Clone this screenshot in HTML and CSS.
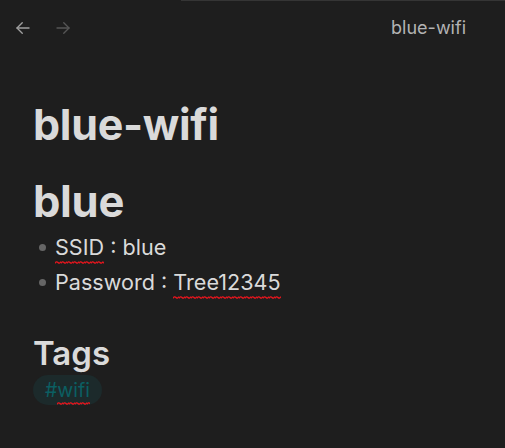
FILE: index.html
```html
<!DOCTYPE html>
<html>
<head>
<meta charset="utf-8">
<link rel="stylesheet" href="styles.css">
</head>
<body>
<div class="app">
  <div class="topline"></div>
  <header class="header">
    <div class="nav">
      <svg class="nav-btn" width="18" height="18" viewBox="0 0 24 24" fill="none" stroke="#a0a0a0" stroke-width="1.8" stroke-linecap="round" stroke-linejoin="round"><path d="M20 12H4"/><path d="M11 19l-7-7 7-7"/></svg>
      <svg class="nav-btn dim" width="18" height="18" viewBox="0 0 24 24" fill="none" stroke="#555" stroke-width="1.8" stroke-linecap="round" stroke-linejoin="round"><path d="M4 12h16"/><path d="M13 5l7 7-7 7"/></svg>
    </div>
    <div class="title">blue-wifi</div>
  </header>
  <main class="note">
    <h1 class="inline-title">blue-wifi</h1>
    <h2 class="h-blue">blue</h2>
    <ul class="list">
      <li><span class="sp">SSID</span> : blue</li>
      <li>Password : <span class="sp">Tree12345</span></li>
    </ul>
    <h3 class="h-tags">Tags</h3>
    <span class="tag">#<span class="sp">wifi</span></span>
  </main>
</div>
</body>
</html>
```
FILE: styles.css
```css
* { box-sizing: border-box; }
html, body { margin: 0; padding: 0; background: #1e1e1e; }
body { font-family: Inter, "Noto Sans", sans-serif; color: #dadada; }
.app { width: 505px; height: 448px; overflow: hidden; position: relative; }
.topline { position: absolute; top: 0; left: 181px; right: 0; height: 1px; background: #353535; }
.header { display: flex; align-items: center; height: 55px; padding: 0 39px 0 14px; }
.nav { display: flex; gap: 22px; }
.nav-btn { display: block; }
.title { margin-left: auto; font-size: 18px; color: #b3b3b3; }
.note { padding: 0 33px; }
.inline-title { margin: 44px 0 0; font-size: 43px; font-weight: 700; line-height: 1.2; letter-spacing: -0.3px; color: #dadada; }
.h-blue { margin: 24px 0 0; font-size: 43.5px; font-weight: 700; line-height: 1.2; color: #dadada; letter-spacing: -0.3px; }
.list { list-style: none; margin: 3px 0 0; padding: 0 0 0 22px; font-size: 21.6px; }
.list li { position: relative; line-height: 35px; }
.list li::before { content: ""; position: absolute; left: -16px; top: 14px; width: 7px; height: 7px; border-radius: 50%; background: #666; }
.sp {
  padding-bottom: 4px;
  background-image: url("data:image/svg+xml,%3Csvg xmlns='http://www.w3.org/2000/svg' width='6' height='3'%3E%3Cpath d='M0 2.3 Q1.5 -0.2 3 1.5 T6 0.7' fill='none' stroke='%23e8141c' stroke-width='1.3'/%3E%3C/svg%3E");
  background-repeat: repeat-x;
  background-position: 0 100%;
  background-size: 6px 3px;
}
.h-tags { margin: 34px 0 0; font-size: 33px; font-weight: 600; line-height: 1.2; color: #dadada; }
.tag { display: inline-block; margin-top: 2px; padding: 3px 12px; border-radius: 16px; background: #1c2a2b; color: #0b5f62; font-size: 19.5px; line-height: 24px; }
.tag .sp { padding-bottom: 3px; }
```
